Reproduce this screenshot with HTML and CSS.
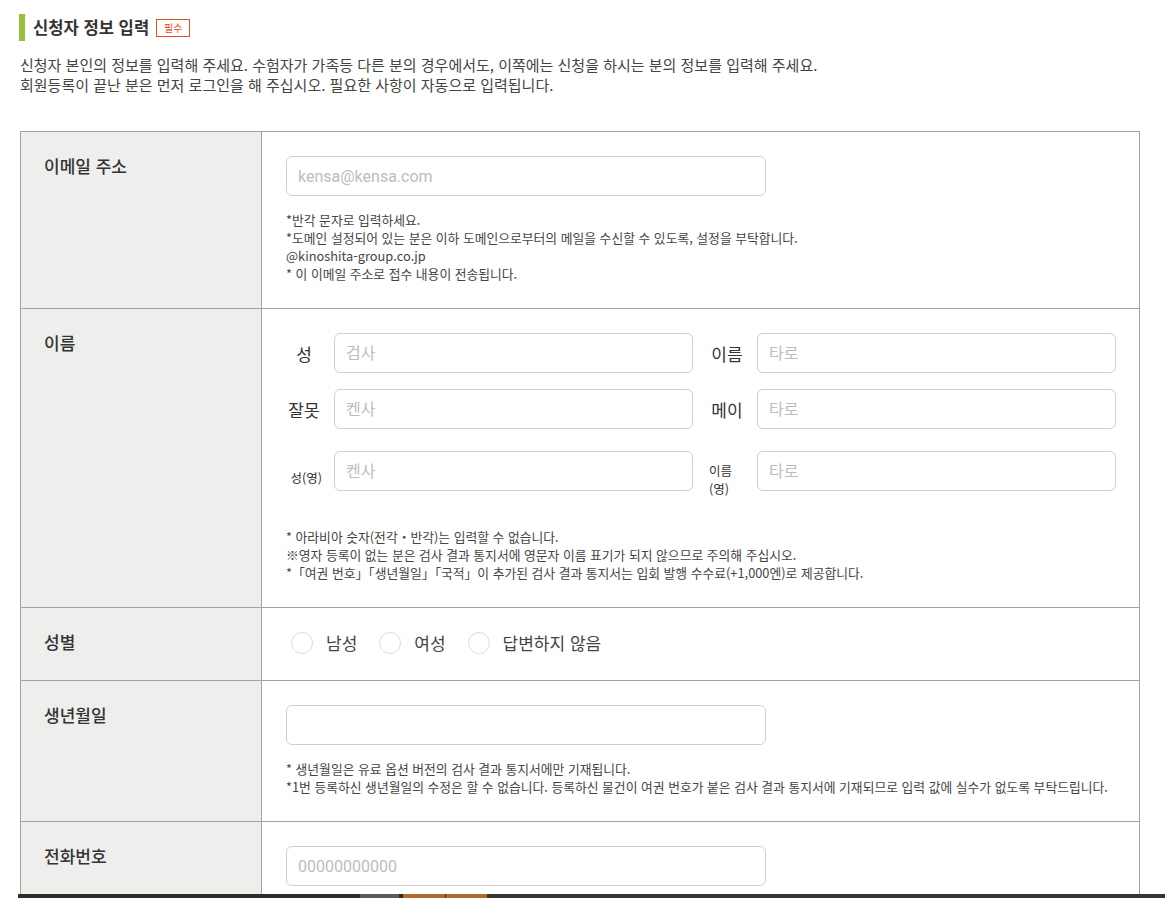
FILE: index.html
```
<!DOCTYPE html>
<html lang="ko">
<head>
    <meta charset="UTF-8">
    <meta name="viewport" content="width=device-width, initial-scale=1.0">
    <title>신청자 정보 입력</title>
    <link rel="stylesheet" href="styles.css">
</head>
<body>
    <div class="page">
        <!-- 제목 -->
        <div class="section-title">
            <h2>신청자 정보 입력</h2>
            <span class="badge">필수</span>
        </div>
        <p class="intro">
            신청자 본인의 정보를 입력해 주세요. 수험자가 가족등 다른 분의 경우에서도, 이쪽에는 신청을 하시는 분의 정보를 입력해 주세요.<br>
            회원등록이 끝난 분은 먼저 로그인을 해 주십시오. 필요한 사항이 자동으로 입력됩니다.
        </p>

        <div class="form-table">
            <!-- 이메일 -->
            <div class="form-row">
                <div class="form-label">이메일 주소</div>
                <div class="form-field">
                    <input type="text" class="text-input" placeholder="kensa@kensa.com">
                    <div class="notes">
                        *반각 문자로 입력하세요.<br>
                        *도메인 설정되어 있는 분은 이하 도메인으로부터의 메일을 수신할 수 있도록, 설정을 부탁합니다.<br>
                        @kinoshita-group.co.jp<br>
                        * 이 이메일 주소로 접수 내용이 전송됩니다.
                    </div>
                </div>
            </div>

            <!-- 이름 -->
            <div class="form-row">
                <div class="form-label">이름</div>
                <div class="form-field">
                    <div class="name-grid">
                        <div class="name-pair">
                            <label class="name-label">성</label>
                            <input type="text" class="text-input" placeholder="검사">
                        </div>
                        <div class="name-pair">
                            <label class="name-label">이름</label>
                            <input type="text" class="text-input" placeholder="타로">
                        </div>
                        <div class="name-pair">
                            <label class="name-label">잘못</label>
                            <input type="text" class="text-input" placeholder="켄사">
                        </div>
                        <div class="name-pair">
                            <label class="name-label">메이</label>
                            <input type="text" class="text-input" placeholder="타로">
                        </div>
                        <div class="name-pair name-pair-en">
                            <label class="name-label small low">성(영)</label>
                            <input type="text" class="text-input" placeholder="켄사">
                        </div>
                        <div class="name-pair name-pair-en">
                            <label class="name-label small left">이름<br>(영)</label>
                            <input type="text" class="text-input" placeholder="타로">
                        </div>
                    </div>
                    <div class="notes notes-name">
                        * 아라비아 숫자(전각・반각)는 입력할 수 없습니다.<br>
                        ※영자 등록이 없는 분은 검사 결과 통지서에 영문자 이름 표기가 되지 않으므로 주의해 주십시오.<br>
                        *「여권 번호」「생년월일」「국적」이 추가된 검사 결과 통지서는 입회 발행 수수료(+1,000엔)로 제공합니다.
                    </div>
                </div>
            </div>

            <!-- 성별 -->
            <div class="form-row">
                <div class="form-label">성별</div>
                <div class="form-field radio-field">
                    <label class="radio"><span class="radio-circle"></span>남성</label>
                    <label class="radio"><span class="radio-circle"></span>여성</label>
                    <label class="radio"><span class="radio-circle"></span>답변하지 않음</label>
                </div>
            </div>

            <!-- 생년월일 -->
            <div class="form-row">
                <div class="form-label">생년월일</div>
                <div class="form-field">
                    <input type="text" class="text-input">
                    <div class="notes">
                        * 생년월일은 유료 옵션 버전의 검사 결과 통지서에만 기재됩니다.<br>
                        *1번 등록하신 생년월일의 수정은 할 수 없습니다. 등록하신 물건이 여권 번호가 붙은 검사 결과 통지서에 기재되므로 입력 값에 실수가 없도록 부탁드립니다.
                    </div>
                </div>
            </div>

            <!-- 전화번호 -->
            <div class="form-row">
                <div class="form-label">전화번호</div>
                <div class="form-field">
                    <input type="text" class="text-input" placeholder="00000000000">
                </div>
            </div>
        </div>
    </div>

    <div class="bottom-bar"></div>
</body>
</html>
```

FILE: styles.css
```
body {
    margin: 0;
    font-family: "Noto Sans CJK KR", "Noto Sans", sans-serif;
    color: #333;
    background-color: #fff;
}

.page {
    width: 1120px;
    margin-left: 20px;
    padding-top: 14px;
    padding-bottom: 60px;
}

.section-title {
    display: flex;
    align-items: center;
    height: 27px;
    margin-left: -1px;
    padding-left: 8px;
    border-left: 6px solid #96c03c;
}

.section-title h2 {
    margin: 0;
    font-size: 16.6px;
    font-weight: bold;
    color: #333;
    line-height: 27px;
}

.badge {
    margin-left: 7px;
    width: 32px;
    height: 16px;
    border: 1px solid #e2502a;
    color: #e2502a;
    font-size: 10px;
    line-height: 16px;
    text-align: center;
}

.intro {
    margin: 14px 0 36px;
    font-size: 15px;
    line-height: 20px;
    color: #444;
}

.form-table {
    border: 1px solid #a3a3a3;
}

.form-row {
    display: grid;
    grid-template-columns: 241px 1fr;
    border-top: 1px solid #a3a3a3;
}

.form-row:first-child {
    border-top: none;
}

.form-label {
    background-color: #eeeeec;
    border-right: 1px solid #a3a3a3;
    padding: 22px 23px;
    font-size: 17px;
    font-weight: 500;
    line-height: 24px;
    color: #333;
}

.form-field {
    padding: 24px 23px 25px 24px;
}

.text-input {
    display: block;
    box-sizing: border-box;
    width: 480px;
    height: 40px;
    padding: 0 11px;
    border: 1px solid #cfcfcf;
    border-radius: 6px;
    font-family: Roboto, "Noto Sans CJK KR", sans-serif;
    font-size: 16px;
    color: #333;
    background: #fff;
}

.text-input::placeholder {
    color: #bdbdbd;
}

.notes {
    margin-top: 15px;
    font-size: 12.8px;
    line-height: 18px;
    color: #444;
}

.notes-name {
    margin-top: 30px;
}

.name-grid {
    display: grid;
    grid-template-columns: 1fr 1fr;
    column-gap: 16px;
    row-gap: 16px;
}

.name-pair {
    display: flex;
    align-items: center;
    gap: 12px;
}

.name-pair-en {
    align-items: flex-start;
    margin-top: 6px;
}

.name-pair .text-input {
    flex: 1;
    width: auto;
}

.name-label {
    width: 36px;
    flex-shrink: 0;
    font-size: 17px;
    text-align: center;
    color: #333;
}

.name-label.small {
    font-size: 12.5px;
    line-height: 18px;
}

.name-label.low {
    padding-top: 18px;
    text-align: right;
}

.name-label.left {
    padding-top: 11px;
    text-align: left;
}

.radio-field {
    display: flex;
    align-items: center;
    padding-top: 23px;
    padding-bottom: 25px;
    padding-left: 29px;
}

.radio {
    display: flex;
    align-items: center;
    margin-right: 22px;
    font-size: 17px;
    line-height: 24px;
    color: #444;
}

.radio-circle {
    width: 20px;
    height: 20px;
    margin-right: 13px;
    border: 1px solid #dcdcdc;
    border-radius: 50%;
    background: #fff;
}

.bottom-bar {
    position: fixed;
    left: 18px;
    right: 0;
    bottom: 0;
    height: 4px;
    background: linear-gradient(to right,
        #2f2e25 0, #2f2e25 342px,
        #5c5b52 342px, #5c5b52 381px,
        #2f2e25 381px, #2f2e25 385px,
        #b4692c 385px, #b4692c 427px,
        #3a2f25 427px, #3a2f25 428px,
        #b4692c 428px, #b4692c 469px,
        #3b342d 469px);
}
```
